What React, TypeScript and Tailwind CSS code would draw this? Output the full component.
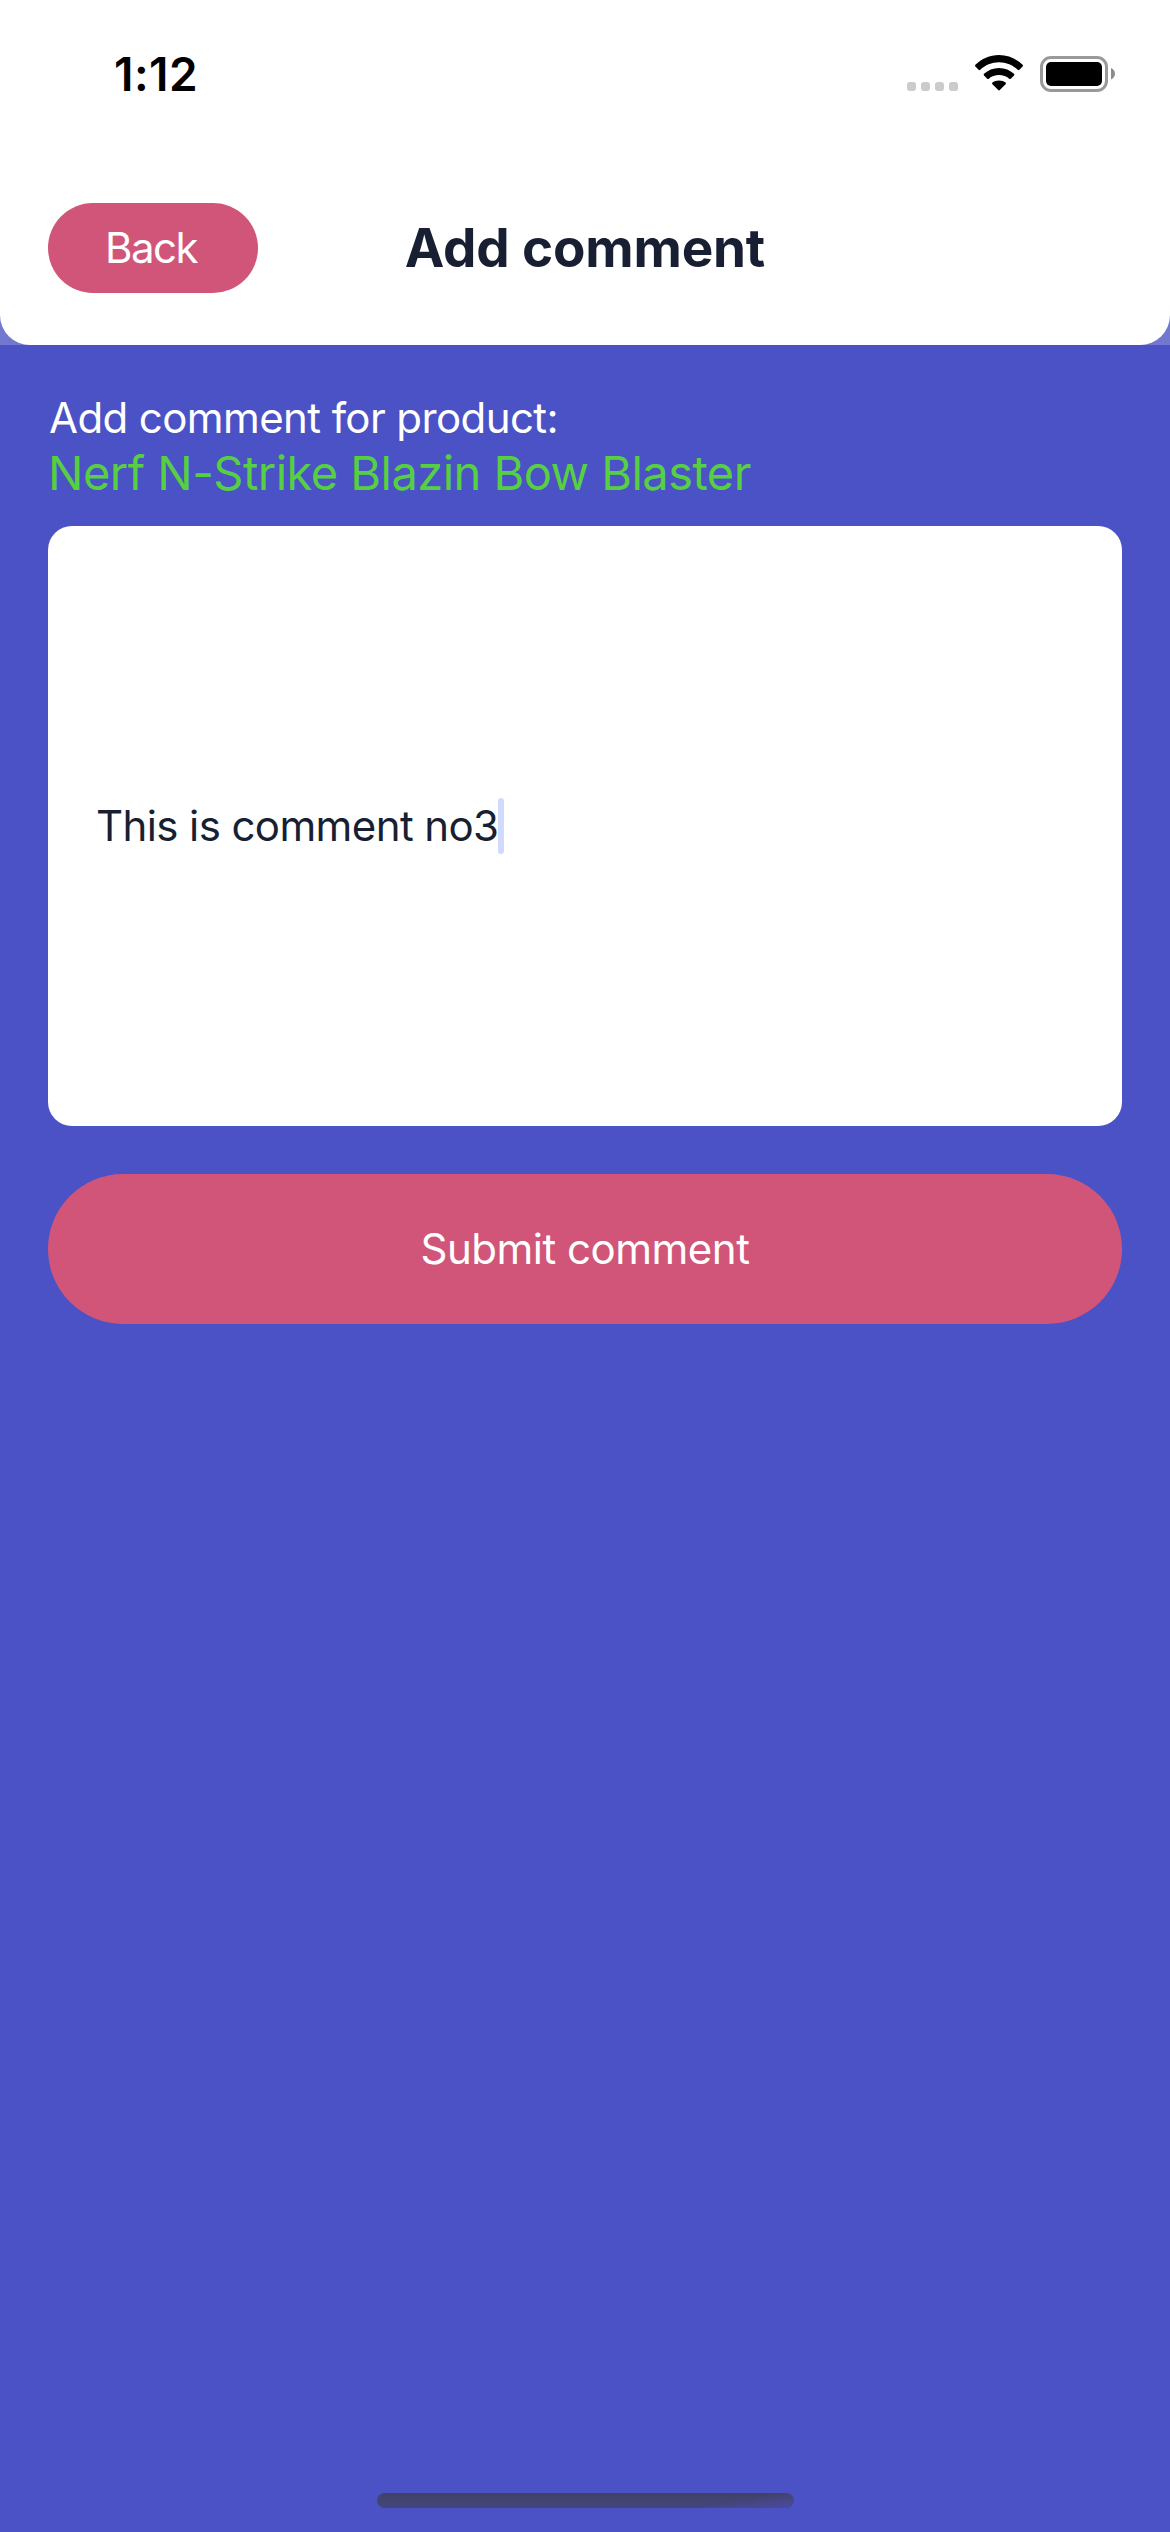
import React from "react";

function StatusBar() {
  return (
    <div className="flex h-[141px] items-start justify-between pl-[114px] pr-[55px]">
      <span className="mt-[46px] text-[46px] leading-[56px] font-semibold tracking-[0.5px] text-black">1:12</span>
      <div className="mt-[54px] flex items-start">
        <div className="mt-7 flex gap-[5px]">
          {[0, 1, 2, 3].map((i) => (
            <span key={i} className="size-[9px] rounded-[3px] bg-[#cbcbcb]" />
          ))}
        </div>
        <svg className="ml-4 block" width="50" height="38" viewBox="0 0 50 38" fill="#000">
          <path d="M25 1C34.2 1 42.5 4.800 48.600 10.800C49.100 11.300 49.100 12 48.600 12.500L45.400 15.800C44.900 16.300 44.200 16.300 43.700 15.800C38.900 11.200 32.300 8.300 25 8.300S11.100 11.200 6.300 15.800C5.800 16.300 5.100 16.300 4.600 15.800L1.400 12.500C.9 12 .9 11.300 1.400 10.800C7.500 4.800 15.800 1 25 1Z" />
          <path d="M25 14C30.900 14 36.100 16.300 40 19.800C40.500 20.300 40.500 20.900 40 21.400L36.800 24.700C36.300 25.200 35.700 25.200 35.200 24.700C32.500 22.400 29 21.100 25 21.100S17.500 22.400 14.800 24.700C14.300 25.200 13.700 25.200 13.200 24.700L10 21.400C9.500 20.900 9.500 20.300 10 19.800C13.900 16.300 19.100 14 25 14Z" />
          <path d="M25 26.400C27.700 26.400 29.900 27.200 31.600 28.600C32.100 29.100 32.100 29.700 31.600 30.200L25.800 36.100C25.300 36.600 24.700 36.600 24.200 36.100L18.400 30.200C17.900 29.700 17.900 29.100 18.400 28.600C20.100 27.200 22.300 26.400 25 26.400Z" />
        </svg>
        <svg className="ml-4 mt-0.5 block" width="75" height="36" viewBox="0 0 75 36">
          <rect x="1.500" y="1.500" width="65" height="33" rx="9.500" fill="none" stroke="#999" strokeWidth="3" />
          <rect x="6" y="6" width="56" height="24" rx="5" fill="#000" />
          <path d="M71 12C73.400 13 75 15.200 75 17.700S73.400 22.400 71 23.400Z" fill="#8c8c8c" />
        </svg>
      </div>
    </div>
  );
}

function Header() {
  return (
    <header className="h-[345px] bg-[#7278d0]">
      <div className="h-full rounded-b-[30px] bg-white">
        <StatusBar />
        <div className="grid grid-cols-[1fr_auto_1fr] items-center px-12 pt-[62px]">
          <button className="flex h-[90px] w-[210px] items-center justify-center rounded-full bg-[#d15579] pr-1 text-[42px] leading-none tracking-[-1.5px] text-white">
            <span>Back</span>
          </button>
          <h1 className="text-[53px] leading-[64px] font-bold tracking-[-0.17px]">Add comment</h1>
          <span />
        </div>
      </div>
    </header>
  );
}

export default function App() {
  return (
    <div className="flex h-[2532px] w-[1170px] flex-col overflow-hidden bg-[#4b52c6] font-['Inter',sans-serif] text-[#191f33]">
      <Header />
      <main className="flex flex-1 flex-col px-12 pt-[48px]">
        <p className="h-[51px] pl-px text-[42px] leading-[50px] tracking-[-0.6px] whitespace-nowrap text-white">
          Add comment for product:
        </p>
        <p className="h-[57px] text-[47px] leading-[57px] tracking-[-0.52px] whitespace-nowrap text-[#57cf43]">
          Nerf N-Strike Blazin Bow Blaster
        </p>
        <div className="mt-[25px] flex h-[600px] items-center rounded-[24px] bg-white px-12 text-[42px] leading-[56px] tracking-[-0.6px]">
          <span>This is comment no3</span>
          <span className="h-[56px] w-1.5 rounded-[3px] bg-[#d0daff]" />
        </div>
        <button className="mt-12 flex h-[150px] items-center justify-center rounded-full bg-[#d15579] pb-px text-[42px] leading-none tracking-[-0.5px] text-white">
          <span>Submit comment</span>
        </button>
      </main>
      <div className="mb-6 ml-[377px] h-[15px] w-[417px] overflow-hidden rounded-full bg-linear-to-b from-[#424266] to-[#434580]">
        <div className="ml-auto h-full w-[90px] bg-linear-to-br from-transparent from-40% to-[#4a4aa0]" />
      </div>
    </div>
  );
}
